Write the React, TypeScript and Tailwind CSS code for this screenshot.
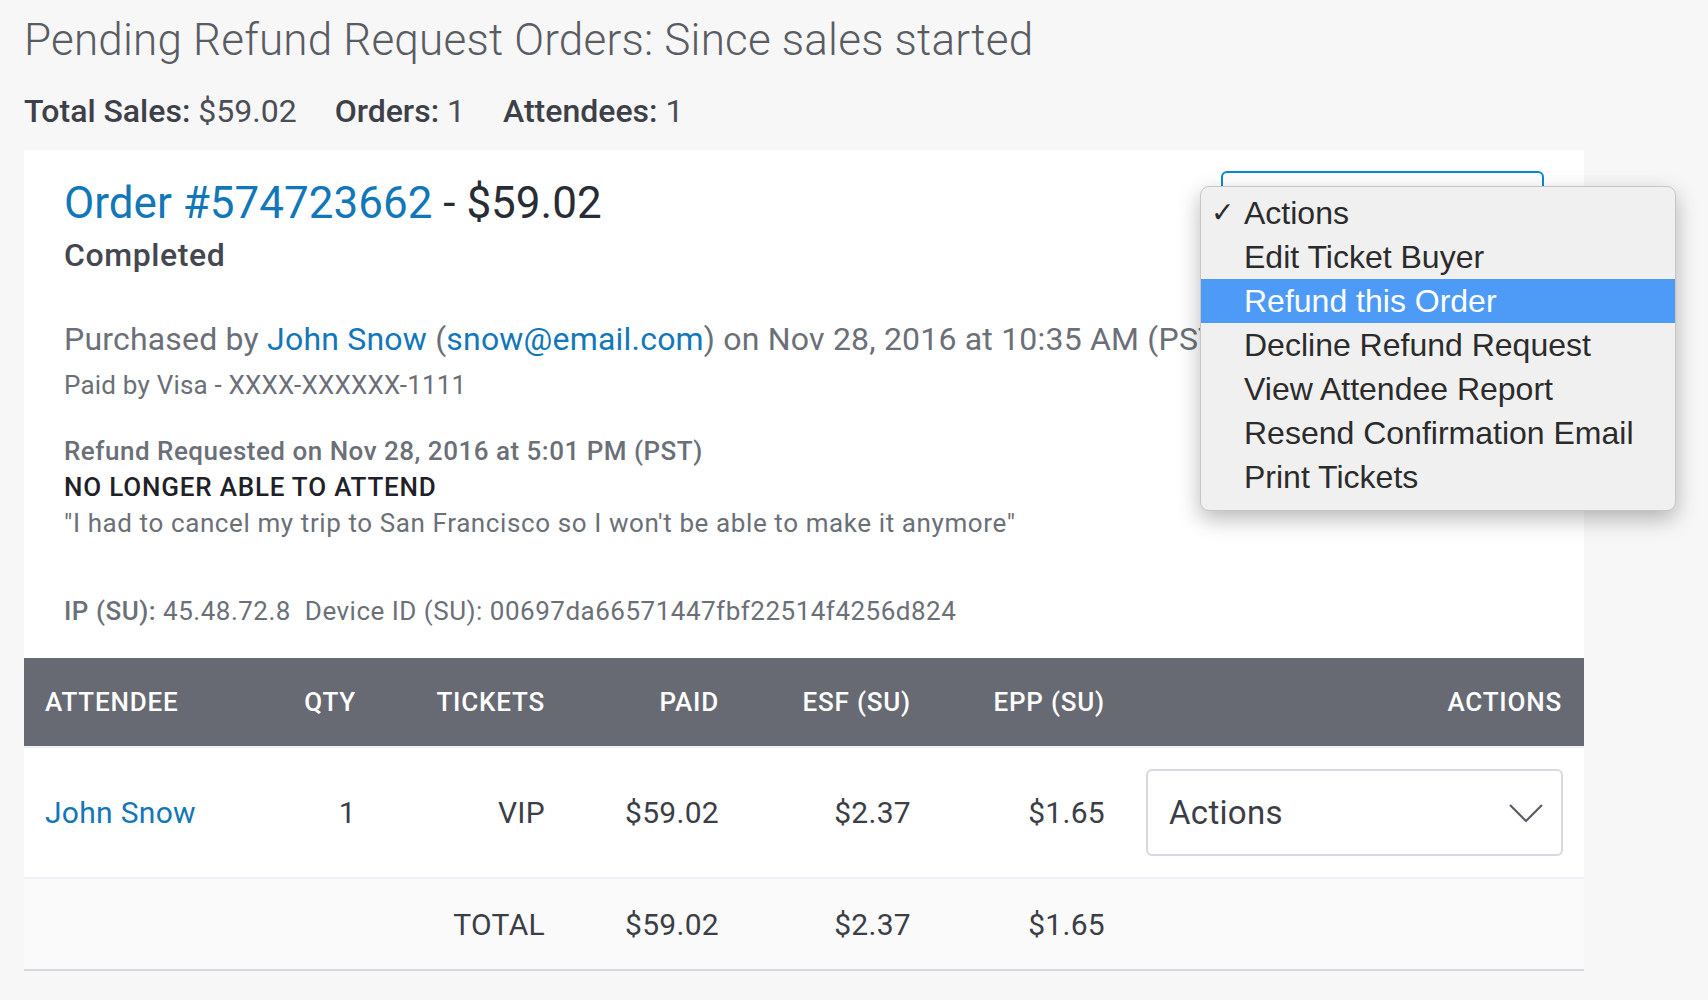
const link = 'text-[#1277b9]';
const cols = 'grid grid-cols-[200px_132px_189px_174px_192px_194px_1fr] items-center';

const menuItems = [
  'Actions',
  'Edit Ticket Buyer',
  'Refund this Order',
  'Decline Refund Request',
  'View Attendee Report',
  'Resend Confirmation Email',
  'Print Tickets',
];

function Chevron() {
  return (
    <svg width="36" height="20" viewBox="0 0 36 20" fill="none">
      <polyline points="2,2 18,18 34,2" stroke="#5a5d66" strokeWidth="2.2" />
    </svg>
  );
}

export default function App() {
  return (
    <div className="relative min-h-[1000px] bg-[#f7f7f8] pl-[24px] pt-[14px] font-['Roboto',sans-serif]">
      <h1 className="text-[44px] font-light leading-[52px] tracking-[0.2px] text-[#5a5c63]">Pending Refund Request Orders: Since sales started</h1>

      <div className="mt-[25px] flex gap-[38px] text-[32px] leading-[40px] text-[#4b4e56]">
        <span>
          <span className="font-medium text-[#3d4048]">Total Sales:</span> $59.02
        </span>
        <span>
          <span className="font-medium text-[#3d4048]">Orders:</span> 1
        </span>
        <span>
          <span className="font-medium text-[#3d4048]">Attendees:</span> 1
        </span>
      </div>

      <div className="relative mt-[19px] w-[1560px] bg-white">
        {/* focused select, mostly hidden under the open menu */}
        <div className="absolute right-[40px] top-[21px] h-[80px] w-[323px] rounded-[6px] border-2 border-[#0a88d2] bg-white" />

        <div className="px-[40px] pb-[29px] pt-[27px]">
          <div className="text-[44px] leading-[52px] text-[#282c35]">
            <span className={link}>Order #574723662</span> - $59.02
          </div>
          <div className="mt-[6px] text-[32px] font-medium leading-[40px] tracking-[0.6px] text-[#44474f]">Completed</div>

          <div className="mt-[44px] whitespace-nowrap text-[32px] leading-[40px] tracking-[0.2px] text-[#6b6f78]">
            Purchased by <span className={link}>John Snow</span> (<span className={link}>snow@email.com</span>) on Nov 28, 2016 at 10:35 AM (PST)
          </div>
          <div className="mt-[9px] text-[26px] leading-[34px] tracking-[0.2px] text-[#6b6f78]">Paid by Visa - XXXX-XXXXXX-1111</div>

          <div className="mt-[31px] text-[26px] font-medium leading-[36px] tracking-[0.5px] text-[#6b6f78]">
            Refund Requested on Nov 28, 2016 at 5:01 PM (PST)
          </div>
          <div className="text-[26px] font-medium leading-[36px] tracking-[0.8px] text-[#1f2128]">NO LONGER ABLE TO ATTEND</div>
          <div className="text-[26px] leading-[36px] tracking-[0.6px] text-[#6b6f78]">
            "I had to cancel my trip to San Francisco so I won't be able to make it anymore"
          </div>

          <div className="mt-[52px] text-[26px] leading-[36px] tracking-[0.5px] text-[#6b6f78]">
            <span className="font-medium">IP (SU):</span> 45.48.72.8&nbsp;&nbsp;Device ID (SU): 00697da66571447fbf22514f4256d824
          </div>
        </div>

        <div className={`${cols} h-[88px] bg-[#676a73] text-[26px] font-medium uppercase tracking-[0.8px] text-white`}>
          <div className="pl-[21px]">Attendee</div>
          <div className="text-right">Qty</div>
          <div className="text-right">Tickets</div>
          <div className="text-right">Paid</div>
          <div className="text-right">ESF (SU)</div>
          <div className="text-right">EPP (SU)</div>
          <div className="pr-[22px] text-right">Actions</div>
        </div>

        <div className={`${cols} h-[131px] border-t-2 border-[#eef1f6] text-[30px] tracking-[0.3px] text-[#3b3e46]`}>
          <div className={`pl-[21px] ${link}`}>John Snow</div>
          <div className="text-right">1</div>
          <div className="text-right">VIP</div>
          <div className="text-right">$59.02</div>
          <div className="text-right">$2.37</div>
          <div className="text-right">$1.65</div>
          <div className="flex justify-end pr-[21px]">
            <div className="flex h-[87px] w-[417px] items-center justify-between rounded-[6px] border-2 border-[#d6d9e1] pl-[21px] pr-[17px] text-[33px] text-[#3b3e46]">
              <span>Actions</span>
              <Chevron />
            </div>
          </div>
        </div>

        <div className={`${cols} h-[94px] border-y-2 border-t-[#eef1f6] border-b-[#d5d7de] bg-[#fafafa] text-[30px] tracking-[0.3px] text-[#3b3e46]`}>
          <div />
          <div />
          <div className="text-right">TOTAL</div>
          <div className="text-right">$59.02</div>
          <div className="text-right">$2.37</div>
          <div className="text-right">$1.65</div>
          <div />
        </div>
      </div>

      {/* native select menu, open */}
      <div className="absolute left-[1200px] top-[186px] w-[476px] rounded-[9px] border border-[#c6c6c6] bg-[#f0f0f0] pb-[11px] pt-[4px] font-['Liberation_Sans',Arial,sans-serif] shadow-[0_8px_22px_rgba(0,0,0,0.28)]">
        {menuItems.map((t, i) => (
          <div
            key={t}
            className={`relative h-[44px] whitespace-nowrap pl-[43px] text-[32px] leading-[44px] ${
              i === 2 ? 'bg-[#4d9bf7] text-white' : 'text-[#2b2b2b]'
            }`}
          >
            {i === 0 && (
              <span className="absolute left-[10px] top-0 font-['DejaVu_Sans',sans-serif] text-[28px] font-bold">✓</span>
            )}
            {t}
          </div>
        ))}
      </div>
    </div>
  );
}
